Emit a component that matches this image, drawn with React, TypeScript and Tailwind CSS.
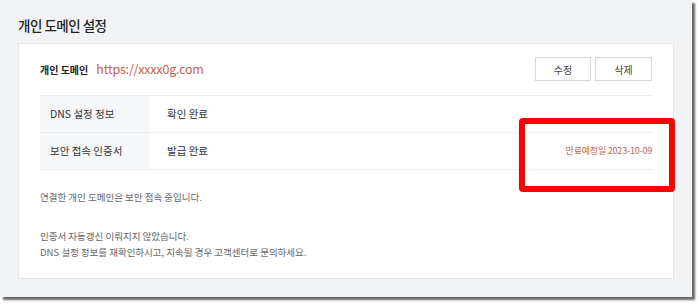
const font = { fontFamily: '"Noto Sans CJK KR", "Noto Sans", sans-serif' }

const rows = [
  { label: 'DNS 설정 정보', value: '확인 완료', note: '' },
  { label: '보안 접속 인증서', value: '발급 완료', note: '만료예정일 2023-10-09' },
]

export default function App() {
  return (
    <div className="w-[700px] h-[306px] bg-white" style={font}>
      <div className="relative w-[692px] h-[297px] bg-[#f2f3f5] shadow-[3px_3px_2px_rgba(0,0,0,0.6)] pl-[18px] pr-[18px] pt-[15px]">
        <h1 className="text-[13.5px] leading-[20px] font-medium tracking-[-0.5px] text-[#222]">개인 도메인 설정</h1>

        <div className="mt-[8px] w-[656px] h-[236px] bg-white border border-[#e6e7ea] px-[21px] pt-[13px]">
          {/* header */}
          <div className="flex items-center h-[24px]">
            <span className="text-[10px] font-bold text-[#222]">개인 도메인</span>
            <span className="ml-[8px] text-[12.5px] tracking-[-0.2px] text-[#c9604f]">https://xxxx0g.com</span>
            <div className="ml-auto flex gap-[4px]">
              <button className="w-[56px] h-[24px] border border-[#d4d6da] bg-white text-[10px] text-[#444]">수정</button>
              <button className="w-[57px] h-[24px] border border-[#d4d6da] bg-white text-[10px] text-[#444]">삭제</button>
            </div>
          </div>

          {/* table */}
          <div className="mt-[14px] border-t border-[#eceef1]">
            {rows.map((r) => (
              <div key={r.label} className="flex h-[37px] border-b border-[#eceef1] text-[10.5px]">
                <div className="w-[110px] bg-[#f7f8fa] pl-[10px] flex items-center text-[#333]">{r.label}</div>
                <div className="flex-1 pl-[17px] flex items-center text-[#333]">{r.value}</div>
                {r.note && (
                  <div className="flex items-center text-[9px] tracking-[-0.2px] text-[#c0665a]">{r.note}</div>
                )}
              </div>
            ))}
          </div>

          {/* notes */}
          <div className="mt-[19px] text-[9.5px] leading-[16px] text-[#666]">
            <p>연결한 개인 도메인은 보안 접속 중입니다.</p>
            <p className="mt-[23px]">인증서 자동갱신 이뤄지지 않았습니다.</p>
            <p>DNS 설정 정보를 재확인하시고, 지속될 경우 고객센터로 문의하세요.</p>
          </div>
        </div>

        {/* annotation box */}
        <div className="absolute left-[519px] top-[118px] w-[156px] h-[74px] border-[6px] border-[#ff0000] rounded-[4px]" />
      </div>
    </div>
  )
}
